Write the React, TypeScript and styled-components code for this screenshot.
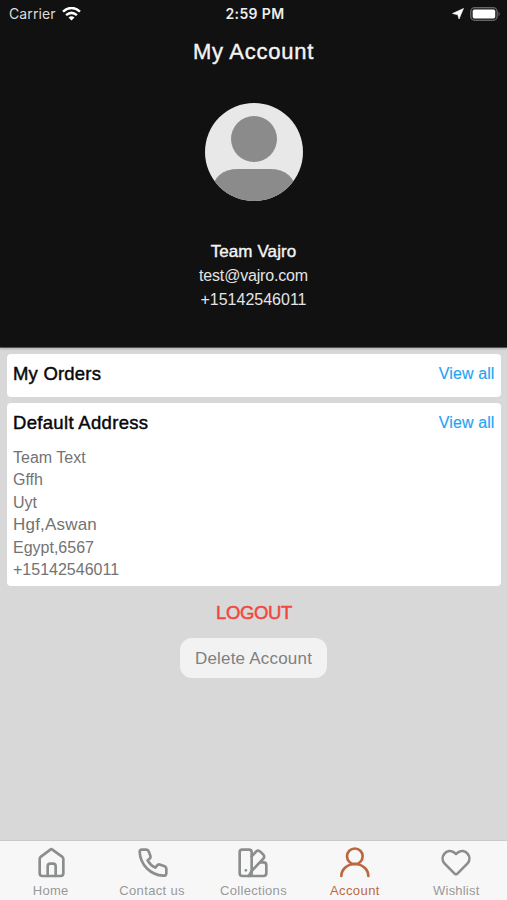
import React from "react";
import styled, { createGlobalStyle } from "styled-components";

const GlobalStyle = createGlobalStyle`
  * { box-sizing: border-box; }
  body { margin: 0; background: #d8d8d8; font-family: "Liberation Sans", Arial, sans-serif; }
`;

const Screen = styled.div`
  width: 507px;
  height: 900px;
  display: flex;
  flex-direction: column;
  overflow: hidden;
  background: #d8d8d8;
`;

const Header = styled.header`
  height: 348px;
  flex: none;
  display: flex;
  flex-direction: column;
  align-items: center;
  background: #111;
  border-bottom: 1px solid #555;
  box-shadow: 0 1px 2px rgba(0, 0, 0, 0.2);
`;

const StatusBar = styled.div`
  width: 100%;
  height: 28px;
  padding: 0 6px 0 9px;
  display: grid;
  grid-template-columns: 1fr auto 1fr;
  align-items: center;
  font-family: Inter, sans-serif;
`;

const StatusGroup = styled.div<{ $end?: boolean }>`
  display: flex;
  align-items: center;
  justify-content: ${(p) => (p.$end ? "flex-end" : "flex-start")};
  gap: 6px;
`;

const Label = styled.span<{
  $size: number;
  $color: string;
  $line?: number;
  $spacing?: number;
  $heavy?: number;
}>`
  display: block;
  white-space: nowrap;
  font-size: ${(p) => p.$size}px;
  line-height: ${(p) => p.$line ?? 20}px;
  color: ${(p) => p.$color};
  letter-spacing: ${(p) => p.$spacing ?? 0}px;
  -webkit-text-stroke: ${(p) => p.$heavy ?? 0}px ${(p) => p.$color};
`;

const Clock = styled(Label)`
  font-weight: 600;
`;

const Title = styled.div`
  margin-top: 10px;
`;

const Avatar = styled.svg`
  display: block;
  margin-top: 37.4px;
  width: 98px;
  height: 98px;
`;

const Profile = styled.div`
  margin-top: 37.6px;
  display: flex;
  flex-direction: column;
  align-items: center;
`;

const Content = styled.main`
  flex: 1;
  display: flex;
  flex-direction: column;
  align-items: center;
  padding: 6px 6px 0 7px;
`;

const Card = styled.section<{ $height: number }>`
  width: 100%;
  height: ${(p) => p.$height}px;
  flex: none;
  margin-bottom: 6px;
  padding: 7px 6.5px 0 6px;
  border-radius: 4px;
  background: #fff;
`;

const CardHead = styled.div`
  display: flex;
  justify-content: space-between;
  align-items: center;
  height: 25px;
`;

const Address = styled.div`
  margin-top: 12px;
`;

const Logout = styled.button`
  margin: 9px 0 0;
  padding: 0;
  border: 0;
  background: none;
  font: inherit;
`;

const DeleteButton = styled.button`
  margin-top: 13px;
  margin-right: 1px;
  padding: 1px 0 0;
  width: 147px;
  height: 40px;
  display: flex;
  align-items: center;
  justify-content: center;
  border: 0;
  border-radius: 12px;
  background: #f2f2f2;
  font: inherit;
`;

const TabBar = styled.nav`
  height: 60px;
  flex: none;
  display: grid;
  grid-template-columns: repeat(5, 1fr);
  background: #f7f7f7;
  border-top: 1px solid #c9c9c9;
`;

const Tab = styled.div`
  display: flex;
  flex-direction: column;
  align-items: center;
  gap: 4px;
  padding-top: 6px;
`;

const TabIcon = styled.svg<{ $color: string }>`
  display: block;
  width: 32px;
  height: 32px;
  fill: none;
  stroke: ${(p) => p.$color};
  stroke-width: 8;
  stroke-linecap: round;
  stroke-linejoin: round;
`;

const grey = "#8c8e8d";
const accent = "#bb6840";

const tabs = [
  {
    name: "Home",
    spacing: 0.3,
    color: grey,
    icon: (
      <>
        <path d="M14 36 Q14 32 18 29 L46 8 Q49 5 52 8 L81 29 Q85 32 85 36 V79 Q85 87 77 87 H22 Q14 87 14 79 Z" />
        <path d="M38 87 V58 Q38 50 46 50 H54 Q62 50 62 58 V87" />
      </>
    ),
  },
  {
    name: "Contact us",
    spacing: 0.35,
    color: grey,
    icon: (
      <path d="M11 15 Q11 8 18 8 H31 Q36 8 38 13 L43 26 Q45 32 40 36 L35 40 Q43 55 58 62 L63 56 Q67 51 73 53 L86 58 Q91 60 91 65 V78 Q91 87 82 86 C44 84 13 54 11 15 Z" />
    ),
  },
  {
    name: "Collections",
    spacing: 0.3,
    color: grey,
    icon: (
      <>
        <rect x="8" y="8" width="36" height="79" rx="8" />
        <path d="M44 28 L58 13 Q64 8 70 14 L79 23 Q84 29 79 35 L44 72" />
        <path d="M69 46 H80 Q88 46 88 55 V78 Q88 87 79 87 H34" />
        <path d="M44 72 L36 86" />
        <path d="M26.5 70 h.1" />
      </>
    ),
  },
  {
    name: "Account",
    spacing: 0.4,
    color: accent,
    icon: (
      <>
        <circle cx="47.5" cy="28" r="23.5" />
        <path d="M7 87 A40.5 36 0 0 1 88 87" />
      </>
    ),
  },
  {
    name: "Wishlist",
    spacing: 0.2,
    color: grey,
    icon: (
      <path d="M48 82 Q46 82 43 79 L14 50 C-4 29 21 1 43 17 L48 21 L53 17 C75 1 100 29 82 50 L53 79 Q50 82 48 82 Z" />
    ),
  },
];

const addressLines = [
  { text: "Team Text", size: 16 },
  { text: "Gffh", size: 16 },
  { text: "Uyt", size: 16 },
  { text: "Hgf,Aswan", size: 17 },
  { text: "Egypt,6567", size: 16 },
  { text: "+15142546011", size: 16 },
];

function CardTitle({ text, spacing }: { text: string; spacing: number }) {
  return (
    <CardHead>
      <Label $size={18.5} $color="#080808" $heavy={0.45} $spacing={spacing}>{text}</Label>
      <Label $size={16} $color="#1fa3f2" $spacing={0.1} $heavy={0.15}>View all</Label>
    </CardHead>
  );
}

export default function App() {
  return (
    <Screen>
      <GlobalStyle />
      <Header>
        <StatusBar>
          <StatusGroup>
            <Label $size={14} $color="#ddd" $spacing={0.1}>Carrier</Label>
            <svg width="19" height="15" viewBox="0 0 19 15" fill="none" stroke="#fff" strokeWidth="2.5">
              <path d="M1 4.6 Q9.5 -2.6 18 4.6" />
              <path d="M4.1 8.1 Q9.5 3.6 14.9 8.1" />
              <path d="M6.5 10.6 Q9.5 8.1 12.5 10.6 L9.5 13.6 Z" fill="#fff" stroke="none" />
            </svg>
          </StatusGroup>
          <Clock $size={14} $color="#eee" $spacing={0.4}>2:59 PM</Clock>
          <StatusGroup $end>
            <svg width="12" height="12" viewBox="0 0 12 12" fill="#fff">
              <path d="M11.5 .5 L7 11 L5.8 6.8 L.5 5.5 Z" stroke="#fff" strokeWidth=".6" />
            </svg>
            <svg width="31" height="14" viewBox="0 0 31 14">
              <rect x=".7" y=".7" width="26.5" height="12.6" rx="4" fill="#222" stroke="#666" strokeWidth="1.3" />
              <rect x="2.7" y="2.4" width="22.5" height="9.2" rx="1.8" fill="#fff" />
              <path d="M28.5 4.8 Q31 7 28.5 9.2 Z" fill="#666" />
            </svg>
          </StatusGroup>
        </StatusBar>
        <Title>
          <Label $size={22} $line={28} $color="#f4f4f4" $heavy={0.4} $spacing={0.75}>My Account</Label>
        </Title>
        <Avatar viewBox="0 0 98 98">
          <defs>
            <clipPath id="avatar"><circle cx="49" cy="49" r="49" /></clipPath>
          </defs>
          <g clipPath="url(#avatar)">
            <rect width="98" height="98" fill="#e8e8e8" />
            <circle cx="49" cy="36" r="23" fill="#8b8b8b" />
            <path d="M6 98 V89 Q10 66 33 66 H65 Q88 66 92 89 V98 Z" fill="#8b8b8b" />
          </g>
        </Avatar>
        <Profile>
          <Label $size={17} $line={25} $color="#f4f4f4" $heavy={0.4} $spacing={0.1}>Team Vajro</Label>
          <Label $size={16} $line={24} $color="#e4e4e4" $spacing={-0.18}>test@vajro.com</Label>
          <Label $size={16} $line={24} $color="#e4e4e4">+15142546011</Label>
        </Profile>
      </Header>
      <Content>
        <Card $height={43}>
          <CardTitle text="My Orders" spacing={0.2} />
        </Card>
        <Card $height={183}>
          <CardTitle text="Default Address" spacing={0.32} />
          <Address>
            {addressLines.map((line) => (
              <Label key={line.text} $size={line.size} $line={22.4} $color="#737373" $spacing={line.size > 16 ? 0.2 : 0}>
                {line.text}
              </Label>
            ))}
          </Address>
        </Card>
        <Logout>
          <Label $size={18.5} $line={24} $color="#f0483e" $heavy={0.5} $spacing={-0.35}>LOGOUT</Label>
        </Logout>
        <DeleteButton>
          <Label $size={17} $color="#808080" $spacing={0.2}>Delete Account</Label>
        </DeleteButton>
      </Content>
      <TabBar>
        {tabs.map((tab) => (
          <Tab key={tab.name}>
            <TabIcon viewBox="0 0 96 96" $color={tab.color}>{tab.icon}</TabIcon>
            <Label $size={13} $line={16} $color={tab.color === grey ? "#999" : accent} $spacing={tab.spacing}>
              {tab.name}
            </Label>
          </Tab>
        ))}
      </TabBar>
    </Screen>
  );
}
